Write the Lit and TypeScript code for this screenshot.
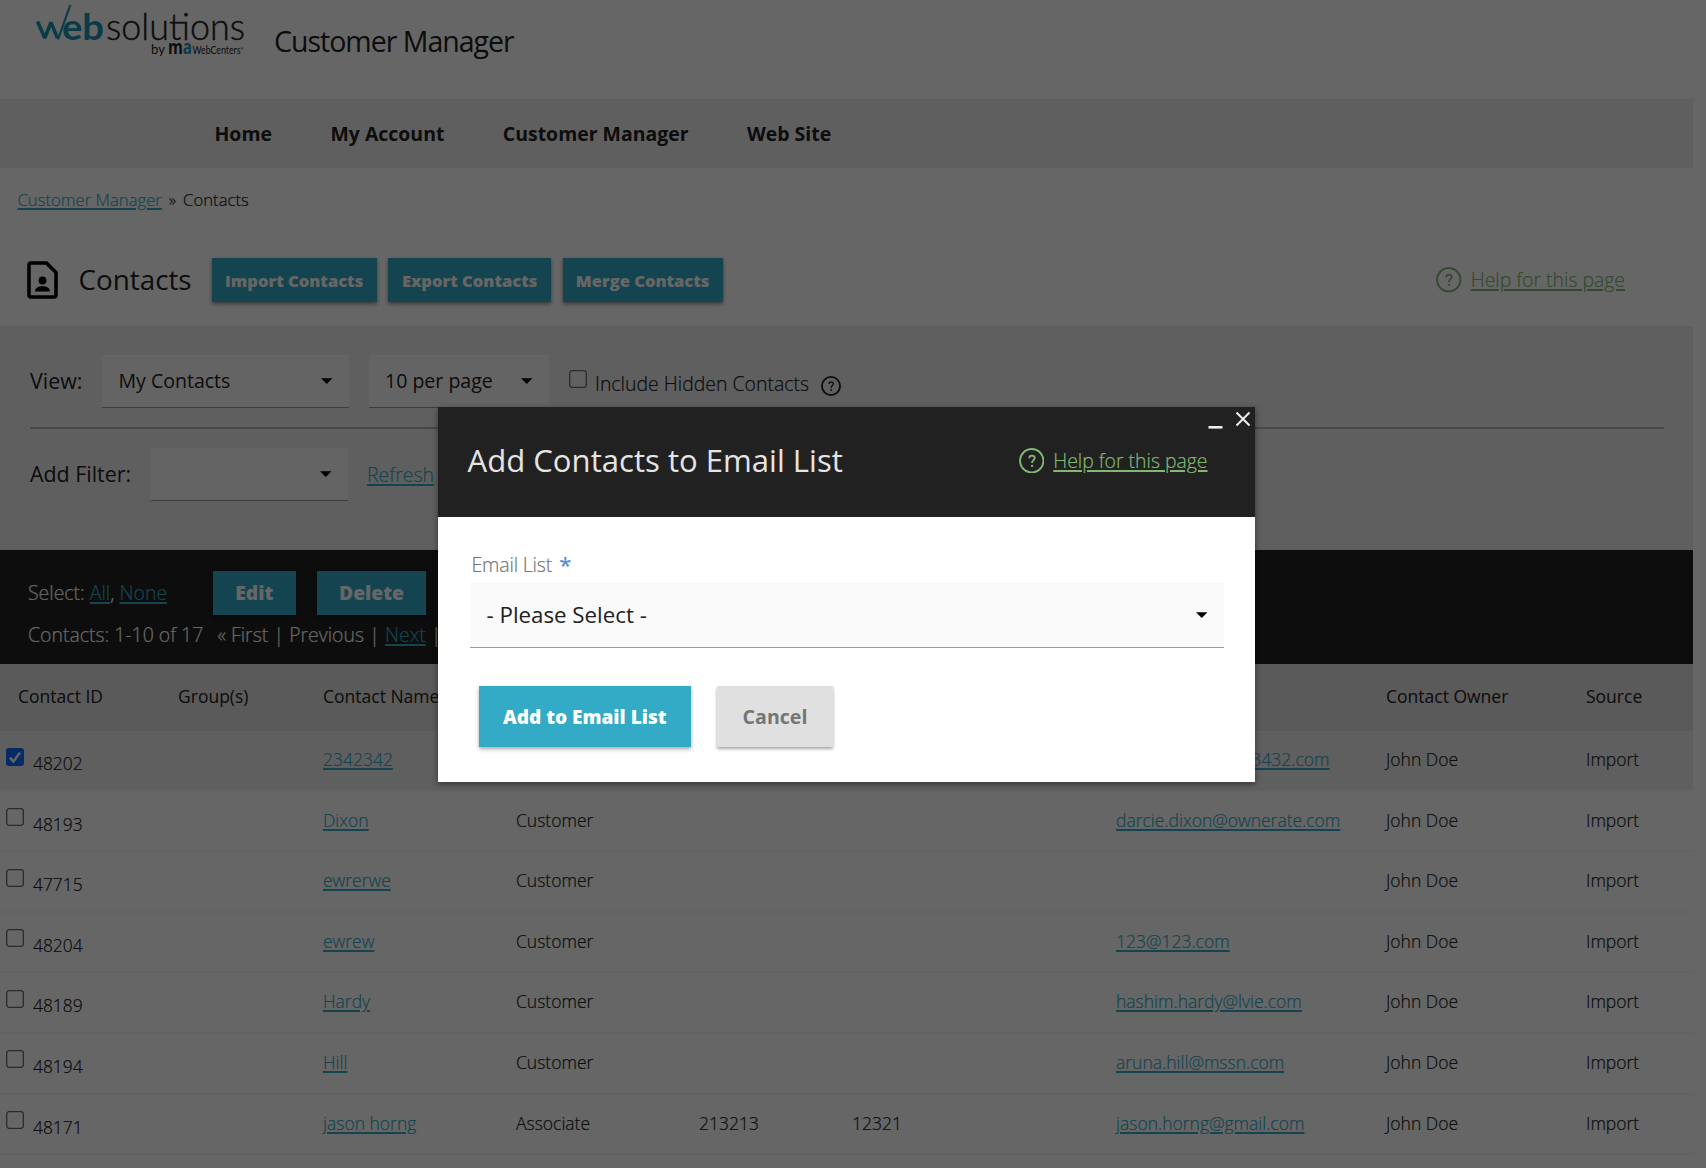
import { LitElement, html, css, svg, nothing } from "lit";
import { customElement, property } from "lit/decorators.js";

interface Contact {
  id: string;
  name: string;
  type: string;
  phone?: string;
  fax?: string;
  email?: string;
  checked?: boolean;
}

const CONTACTS: Contact[] = [
  { id: "48202", name: "2342342", type: "Customer", email: "23423423@23423432.com", checked: true },
  { id: "48193", name: "Dixon", type: "Customer", email: "darcie.dixon@ownerate.com" },
  { id: "47715", name: "ewrerwe", type: "Customer" },
  { id: "48204", name: "ewrew", type: "Customer", email: "123@123.com" },
  { id: "48189", name: "Hardy", type: "Customer", email: "hashim.hardy@lvie.com" },
  { id: "48194", name: "Hill", type: "Customer", email: "aruna.hill@mssn.com" },
  { id: "48171", name: "jason horng", type: "Associate", phone: "213213", fax: "12321", email: "jason.horng@gmail.com" },
];

const questionMark = svg`
  <path d="M9.6 9.6c.1-1.500 1.100-2.500 2.600-2.500 1.500 0 2.600.900 2.600 2.300 0 1.900-2.500 2.100-2.500 4.300v.4" fill="none" stroke="currentColor" stroke-width="1.700"/>
  <circle cx="12.300" cy="16.800" r="1.100" fill="currentColor"/>`;

@customElement("help-link")
export class HelpLink extends LitElement {
  static styles = css`
    :host { display: flex; align-items: center; gap: 9.200px; color: #81b973; }
    .icon { width: 25.500px; height: 25.500px; display: block; }
    .link { font: 300 19.4px/26px "Open Sans", sans-serif; color: inherit; text-decoration: underline; text-decoration-thickness: 1.5px; text-underline-offset: 2px; white-space: nowrap; -webkit-text-stroke: .2px; }
  `;
  render() {
    return html`
      <svg class="icon" viewBox="0 0 24 24"><circle cx="12" cy="12" r="11" fill="none" stroke="currentColor" stroke-width="1.800"/>${questionMark}</svg>
      <a class="link">Help for this page</a>`;
  }
}

@customElement("select-box")
export class SelectBox extends LitElement {
  @property() value = "";
  static styles = css`
    :host { display: flex; align-items: center; justify-content: space-between; box-sizing: border-box; padding: 0 16.500px 0 16.500px; background: #fafafa; border-bottom: 1.500px solid #9a9a9a; color: #212121; font: 400 19.55px/28px "Open Sans", sans-serif; white-space: nowrap; }
    .arrow { width: 11.500px; height: 6px; display: block; fill: #000; }
  `;
  render() {
    return html`<span>${this.value}</span><svg class="arrow" viewBox="0 0 12 6"><path d="M0 0h12L6 6z"/></svg>`;
  }
}

@customElement("check-box")
export class CheckBox extends LitElement {
  @property({ type: Boolean }) checked = false;
  static styles = css`
    :host { display: block; width: 18px; height: 18px; flex: none; }
    .box { display: block; width: 18px; height: 18px; }
  `;
  render() {
    return this.checked
      ? html`<svg class="box" viewBox="0 0 18 18"><rect width="18" height="18" rx="3" fill="#0a6cff"/><path d="M4 9.600l3.400 4L14 4.500" fill="none" stroke="#fff" stroke-width="2.400"/></svg>`
      : html`<svg class="box" viewBox="0 0 18 18"><rect x=".7" y=".7" width="16.600" height="16.600" rx="2.500" fill="#fff" fill-opacity=".3" stroke="#6c6c6c" stroke-width="1.300"/></svg>`;
  }
}

@customElement("app-root")
export class AppRoot extends LitElement {
  static styles = css`
    :host { display: block; position: relative; width: 1706px; height: 1168px; overflow: hidden; background: #fff; color: #212121; font-family: "Open Sans", sans-serif; }
    .page { width: 1693px; display: flex; flex-direction: column; }
    a { color: #33aac6; text-decoration: underline; text-decoration-thickness: 1.5px; text-underline-offset: 2px; }
    .brand { height: 99px; display: flex; align-items: flex-start; padding-left: 34px; }
    .logo { width: 212px; height: 62px; display: block; overflow: visible; }
    .app-name { margin: 22px 0 0 28px; font-size: 28.500px; line-height: 38px; letter-spacing: -1px; white-space: nowrap; }
    .nav { height: 69px; background: #eee; display: flex; align-items: center; gap: 58.500px; padding-left: 214.500px; font-weight: 700; font-size: 19.450px; }
    .crumbs { height: 66px; box-sizing: border-box; padding: 0 0 3px 17.500px; display: flex; align-items: center; gap: 7px; font-weight: 300; font-size: 16.700px; -webkit-text-stroke: .2px; }
    .heading { height: 92px; display: flex; align-items: center; padding: 0 68px 0 27px; }
    .file-icon { width: 31px; height: 38px; display: block; }
    .title { font-size: 27.800px; font-weight: 400; line-height: 40px; margin: 0 20px 2px 20.500px; }
    .buttons { display: flex; gap: 11.500px; }
    .btn { height: 44px; box-sizing: border-box; display: flex; align-items: center; justify-content: center; background: #33aac6; color: #fff; font-weight: 800; font-size: 16.500px; box-shadow: 0 2px 4px rgba(0,0,0,.45); white-space: nowrap; }
    .import { width: 165px; }
    .export { width: 163px; }
    .merge { width: 160px; }
    .spacer { flex: 1; }
    .filters { height: 224px; box-sizing: border-box; background: #eee; padding: 29px 29px 0 30px; display: flex; flex-direction: column; }
    .filter-row { display: flex; height: 53px; align-items: center; font-size: 21.400px; }
    .view { width: 72px; margin-bottom: 3px; }
    .add { width: 121px; margin-bottom: 3px; }
    .s-view { width: 247px; height: 53px; margin-right: 19.500px; }
    .s-size { width: 180.500px; height: 53px; margin-right: 20px; }
    .s-filter { width: 197px; height: 53px; margin-right: 19px; }
    .hidden-check { margin-bottom: 6px; }
    .hidden-label { margin: 4px 12px 0 8px; font-weight: 300; font-size: 19.450px; -webkit-text-stroke: .2px; }
    .hint { width: 20px; height: 20px; margin-top: 8px; }
    .rule { height: 2px; background: #b4b4b4; margin: 19px 0 19px; flex: none; }
    .refresh { font-weight: 300; font-size: 19.500px; -webkit-text-stroke: .2px; }
    .actions { height: 114px; box-sizing: border-box; background: #212121; color: #fff; padding: 20px 28px 0; font-weight: 300; font-size: 19.450px; }
    .actions-row { display: flex; align-items: center; height: 45px; }
    .select-links { width: 185px; -webkit-text-stroke: .2px; }
    .edit { width: 82.500px; margin-right: 21.500px; font-size: 19.300px; }
    .delete { width: 109px; font-size: 19.300px; }
    .pager { display: flex; height: 39px; align-items: center; gap: 5.200px; white-space: nowrap; -webkit-text-stroke: .2px; }
    .count { margin-right: 9px; }
    .head, .line { display: grid; grid-template-columns: 178px 145px 193px 183px 153px 264px 270px 1fr 107px; }
    .head { height: 67px; background: #e0e0e0; font-size: 17.500px; line-height: 65px; }
    .head-id { padding-left: 18px; }
    .line { height: 60.6px; box-sizing: border-box; border-bottom: 2px solid #f8f8f8; font-weight: 300; font-size: 17.500px; line-height: 56.600px; -webkit-text-stroke: .2px; }
    .picked { background: #eee; }
    .id { display: flex; gap: 9px; padding: 16.500px 0 0 6px; line-height: 31px; }
    .id-text { padding-top: .500px; font-size: 17.400px; }
    .shade { position: absolute; inset: 0; background: rgba(0,0,0,.6); }
    .dialog { position: absolute; left: 438px; top: 406.500px; width: 817px; height: 375px; background: #fff; box-shadow: 0 2px 6px rgba(0,0,0,.45); display: flex; flex-direction: column; }
    .dialog-head { height: 110px; background: #212121; color: #e4e4e4; display: flex; box-sizing: border-box; padding: 0 47.500px 2px 29.500px; align-items: center; justify-content: space-between; flex: none; }
    .dialog-title { margin: 0 0 2px; font-size: 31.100px; font-weight: 400; white-space: nowrap; }
    .window-icons { position: absolute; right: 4.500px; top: 4.500px; width: 44px; height: 20px; }
    .form { padding: 38px 31.500px 0 32px; display: flex; flex-direction: column; }
    .label { display: flex; gap: 7px; margin-left: 1.500px; height: 27.500px; font-size: 19.600px; font-weight: 300; color: #757575; letter-spacing: -.2px; line-height: 20px; -webkit-text-stroke: .2px; }
    .star { color: #4a8fd9; font-weight: 400; font-size: 22px; line-height: 19px; }
    .s-list { height: 66px; font-size: 22.300px; padding-top: 1px; }
    .dialog-actions { display: flex; gap: 26px; margin: 38px 0 0 8.500px; }
    .submit { width: 212.500px; height: 61px; font-size: 19.050px; box-shadow: 0 2px 4px rgba(0,0,0,.35); }
    .cancel { width: 116px; height: 61px; font-size: 19.600px; font-weight: 700; color: #757575; background: #e0e0e0; box-shadow: 0 2px 3px rgba(0,0,0,.35); }
  `;

  private contact(c: Contact) {
    return html`<div class="line ${c.checked ? "picked" : ""}">
      <div class="id"><check-box ?checked=${!!c.checked}></check-box><span class="id-text">${c.id}</span></div>
      <span></span>
      <span><a>${c.name}</a></span>
      <span>${c.type}</span>
      <span>${c.phone ?? nothing}</span>
      <span>${c.fax ?? nothing}</span>
      <span>${c.email ? html`<a>${c.email}</a>` : nothing}</span>
      <span>John Doe</span>
      <span>Import</span>
    </div>`;
  }

  render() {
    return html`
      <div class="page">
        <header class="brand">
          <svg class="logo" viewBox="34 0 212 62">
            <g fill="none" stroke="#1a96b4" stroke-width="3.600" stroke-linejoin="bevel">
              <path d="M37.500 21.500l7.300 16.500L51 22.500l6.500 15.500"/>
              <path d="M58 39.500L70.300 5" stroke-width="2.200"/>
            </g>
            <text x="62" y="40.300" textLength="42" lengthAdjust="spacingAndGlyphs" font-family="Lato" font-weight="700" font-size="36.500" fill="#1a96b4">eb</text>
            <text x="106" y="40" textLength="139" lengthAdjust="spacingAndGlyphs" font-family="Lato" font-weight="300" font-size="37" fill="#222" stroke="#222" stroke-width=".4">solutions</text>
            <text x="151" y="53.500" textLength="14" lengthAdjust="spacingAndGlyphs" font-family="Lato" font-size="14" fill="#222">by</text>
            <text x="168" y="54" textLength="24" lengthAdjust="spacingAndGlyphs" font-family="Open Sans" font-weight="700" font-size="19" fill="#222">m<tspan fill="#1a96b4">a</tspan></text>
            <text x="192.500" y="54" textLength="48" lengthAdjust="spacingAndGlyphs" font-family="Lato" font-size="10.500" fill="#222">WebCenters</text>
            <text x="240.500" y="50" font-family="Lato" font-size="4" fill="#222">®</text>
          </svg>
          <div class="app-name">Customer Manager</div>
        </header>
        <nav class="nav"><span>Home</span><span>My Account</span><span>Customer Manager</span><span>Web Site</span></nav>
        <div class="crumbs"><a>Customer Manager</a><span>»</span><span>Contacts</span></div>
        <div class="heading">
          <svg class="file-icon" viewBox="0 0 31 38">
            <path d="M4 2h15.500L29 11.500V34a2 2 0 0 1-2 2H4a2 2 0 0 1-2-2V4a2 2 0 0 1 2-2z" fill="none" stroke="#000" stroke-width="3.600"/>
            <circle cx="15.500" cy="19.500" r="3.900"/><path d="M8 30.500c0-3.500 3.500-5.200 7.500-5.200s7.500 1.700 7.500 5.200z"/>
          </svg>
          <h1 class="title">Contacts</h1>
          <div class="buttons">
            <div class="btn import">Import Contacts</div><div class="btn export">Export Contacts</div><div class="btn merge">Merge Contacts</div>
          </div>
          <div class="spacer"></div>
          <help-link></help-link>
        </div>
        <section class="filters">
          <div class="filter-row">
            <span class="view">View:</span>
            <select-box class="s-view" value="My Contacts"></select-box>
            <select-box class="s-size" value="10 per page"></select-box>
            <check-box class="hidden-check"></check-box>
            <span class="hidden-label">Include Hidden Contacts</span>
            <svg class="hint" viewBox="0 0 24 24"><circle cx="12" cy="12" r="10.900" fill="none" stroke="currentColor" stroke-width="2.200"/>${questionMark}</svg>
          </div>
          <div class="rule"></div>
          <div class="filter-row">
            <span class="add">Add Filter:</span>
            <select-box class="s-filter"></select-box>
            <a class="refresh">Refresh</a>
          </div>
        </section>
        <section class="actions">
          <div class="actions-row">
            <span class="select-links">Select: <a>All</a>, <a>None</a></span>
            <div class="btn edit">Edit</div><div class="btn delete">Delete</div>
          </div>
          <div class="pager"><span class="count">Contacts: 1-10 of 17</span><span>« First</span><span>|</span><span>Previous</span><span>|</span><a>Next</a><span>|</span></div>
        </section>
        <section>
          <div class="head">
            <span class="head-id">Contact ID</span><span>Group(s)</span><span>Contact Name</span><span></span><span></span><span></span><span></span><span>Contact Owner</span><span>Source</span>
          </div>
          ${CONTACTS.map((c) => this.contact(c))}
        </section>
      </div>
      <div class="shade"></div>
      <div class="dialog" role="dialog">
        <div class="dialog-head">
          <h2 class="dialog-title">Add Contacts to Email List</h2>
          <help-link></help-link>
        </div>
        <svg class="window-icons" viewBox="0 0 44 20" fill="none" stroke="#eee"><path d="M1.500 16.300h14" stroke-width="2.600"/><path d="M29.500 1.500l13 13m0-13l-13 13" stroke-width="2"/></svg>
        <div class="form">
          <div class="label"><span>Email List</span><span class="star">*</span></div>
          <select-box class="s-list" value="- Please Select -"></select-box>
          <div class="dialog-actions"><div class="btn submit">Add to Email List</div><div class="btn cancel">Cancel</div></div>
        </div>
      </div>`;
  }
}
